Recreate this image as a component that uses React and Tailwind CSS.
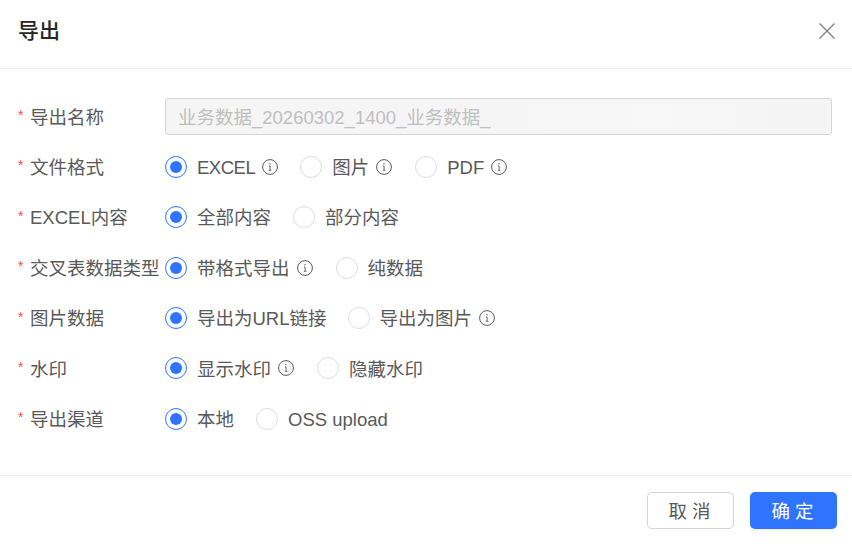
import React from 'react';

const FONT = "font-['Liberation_Sans','Noto_Sans_CJK_SC',sans-serif]";

function InfoIcon() {
  return (
    <svg className="ml-[7px] shrink-0" width="16" height="16" viewBox="0 0 16 16" fill="none" stroke="#595959">
      <circle cx="8" cy="8" r="7.4" strokeWidth="1" />
      <path d="M6.9 7h1.2v4.2M6.8 11.3h2.6" strokeWidth="0.9" />
      <circle cx="8" cy="4.7" r="0.7" fill="#595959" stroke="none" />
    </svg>
  );
}

function Radio({ label, checked, info, gap, textClass }) {
  return (
    <label className={`flex items-center ${gap}`}>
      {checked ? (
        <span className="flex h-[22px] w-[22px] shrink-0 items-center justify-center rounded-full border border-[#2f74ff] bg-white">
          <span className="h-[12px] w-[12px] rounded-full bg-[#2f74ff]" />
        </span>
      ) : (
        <span className="h-[22px] w-[22px] shrink-0 rounded-full border border-[#dedede] bg-white" />
      )}
      <span className={`ml-[10px] whitespace-nowrap pt-[2px] ${textClass}`}>{label}</span>
      {info && <InfoIcon />}
    </label>
  );
}

function Row({ label, children }) {
  return (
    <div className="flex h-[37px] items-center">
      <div className="flex w-[165px] shrink-0 items-center whitespace-nowrap pl-[18px] text-[#595959]">
        <span className="mb-[3px] w-[12px] text-[14px] leading-none text-[#ff4d4f]">*</span>
        <span className="pt-[2px]">{label}</span>
      </div>
      {children}
    </div>
  );
}

export default function App() {
  return (
    <div className={`flex h-[546px] w-[852px] flex-col overflow-hidden bg-white text-[18.5px] text-[#595959] ${FONT}`}>
      <header className="flex h-[69px] shrink-0 items-center justify-between border-b border-[#ececec] pb-[6px] pl-[18px] pr-[16px]">
        <h1 className="text-[21px] font-medium text-[#262626]">导出</h1>
        <svg width="18" height="18" viewBox="0 0 18 18" fill="none" stroke="#7f7f7f" strokeWidth="1.3">
          <path d="M1.5 1.5l15 15M16.5 1.5l-15 15" />
        </svg>
      </header>

      <main className="flex flex-1 flex-col gap-y-[13.4px] pt-[29px]">
        <Row label="导出名称">
          <div className="relative flex h-[37px] w-[667px] items-center overflow-hidden rounded-[3px] border border-[#d4d4d4] bg-[#f5f5f5] pl-[12px] pt-[2px] text-[#bfbfbf]">
            <span className="whitespace-nowrap">业务数据_20260302_1400_业务数据_业务数据</span>
            <div className="absolute inset-y-[5px] left-[325px] right-[4px] bg-gradient-to-r from-[#f5f5f5] via-[#f8f8f8] to-[#f3f3f3]" />
          </div>
        </Row>
        <Row label="文件格式">
          <Radio checked label="EXCEL" info gap="mr-[22px]" textClass="tracking-[-0.5px]" />
          <Radio label="图片" info gap="mr-[23px]" />
          <Radio label="PDF" info />
        </Row>
        <Row label="EXCEL内容">
          <Radio checked label="全部内容" gap="mr-[22px]" />
          <Radio label="部分内容" />
        </Row>
        <Row label="交叉表数据类型">
          <Radio checked label="带格式导出" info gap="mr-[23px]" />
          <Radio label="纯数据" />
        </Row>
        <Row label="图片数据">
          <Radio checked label="导出为URL链接" gap="mr-[21px]" />
          <Radio label="导出为图片" info />
        </Row>
        <Row label="水印">
          <Radio checked label="显示水印" info gap="mr-[23px]" />
          <Radio label="隐藏水印" />
        </Row>
        <Row label="导出渠道">
          <Radio checked label="本地" gap="mr-[22px]" />
          <Radio label="OSS upload" />
        </Row>
      </main>

      <footer className="flex h-[71px] shrink-0 justify-end gap-x-[16px] border-t border-[#ececec] pr-[15px] pt-[16px]">
        <button className="h-[37px] w-[87px] rounded-[5px] border border-[#d4d4d4] bg-white pl-[3px] pt-[2px] tracking-[5px] text-[#595959]">取消</button>
        <button className="h-[37px] w-[87px] rounded-[5px] bg-[#2f74ff] pl-[3px] pt-[2px] tracking-[5px] text-white shadow-[0_2px_3px_rgba(0,0,0,0.06)]">确定</button>
      </footer>
    </div>
  );
}
